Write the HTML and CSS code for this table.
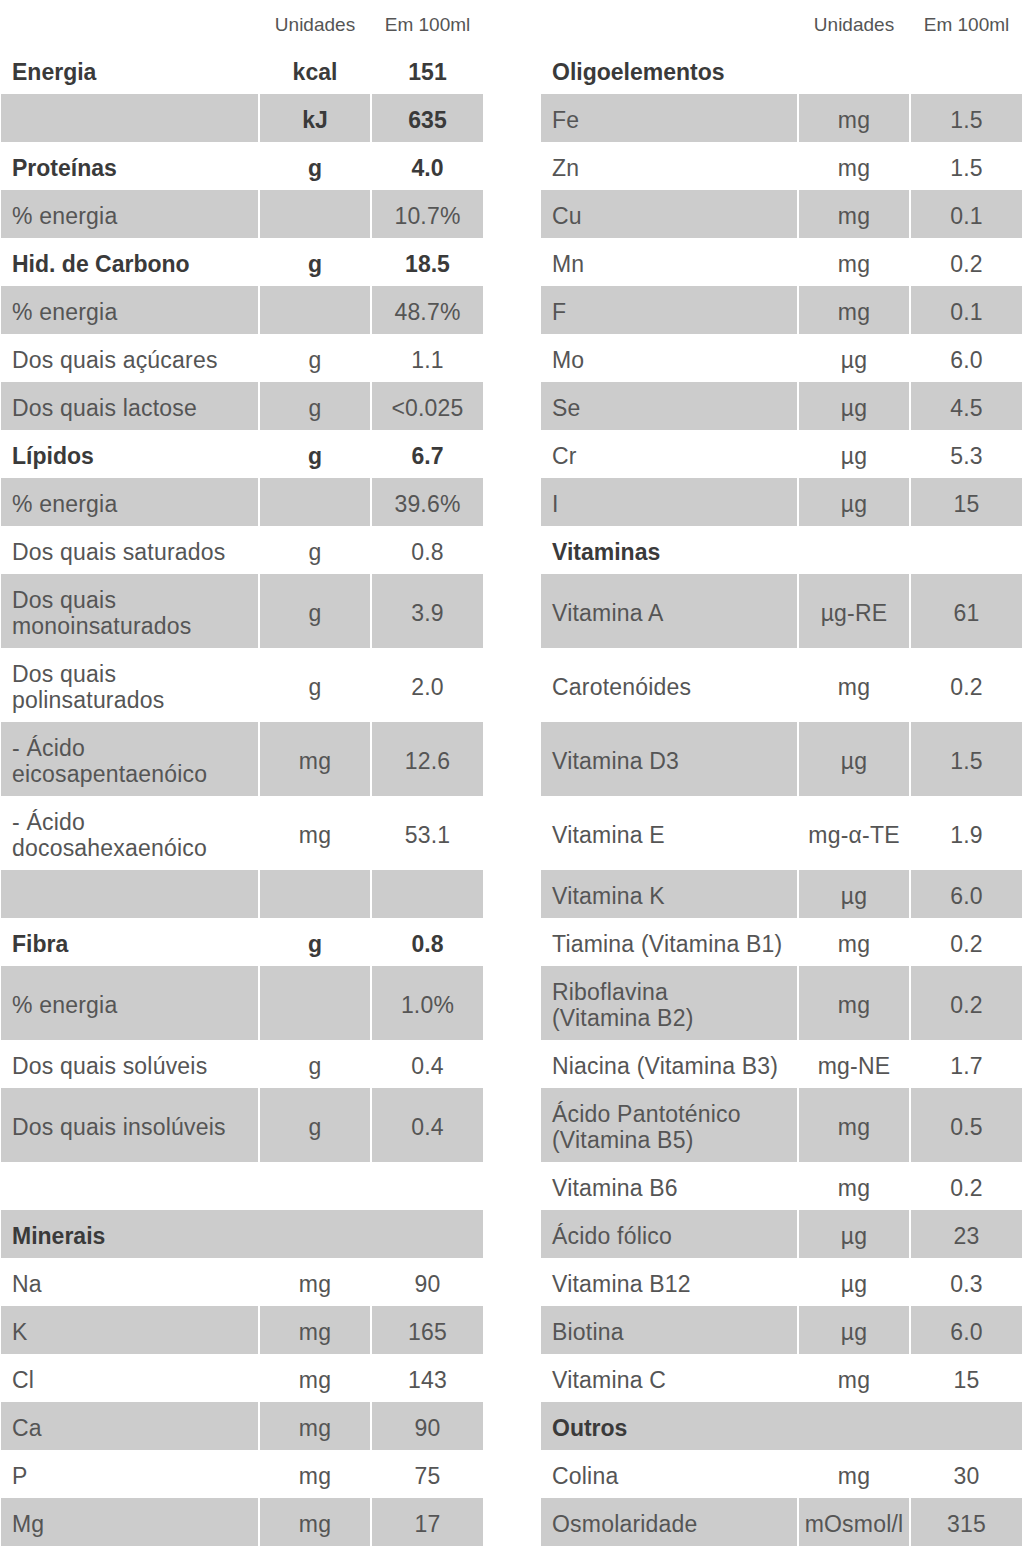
FILE: index.html
```html
<!DOCTYPE html>
<html lang="pt">
<head>
<meta charset="utf-8">
<title>Informação nutricional</title>
<link rel="stylesheet" href="styles.css">
</head>
<body>
<table class="nutri">
  <colgroup>
    <col class="c-label"><col class="c-unit"><col class="c-val">
    <col class="c-gap">
    <col class="c-label2"><col class="c-unit"><col class="c-val2">
  </colgroup>
  <tbody>
    <tr class="head">
      <td></td><td class="u">Unidades</td><td class="v">Em 100ml</td>
      <td class="gap"></td>
      <td></td><td class="u">Unidades</td><td class="v">Em 100ml</td>
    </tr>
    <tr>
      <td class="l b">Energia</td><td class="u b">kcal</td><td class="v b">151</td>
      <td class="gap"></td>
      <td class="l b" colspan="3">Oligoelementos</td>
    </tr>
    <tr class="alt">
      <td class="l"></td><td class="u b">kJ</td><td class="v b">635</td>
      <td class="gap"></td>
      <td class="l">Fe</td><td class="u">mg</td><td class="v">1.5</td>
    </tr>
    <tr>
      <td class="l b">Proteínas</td><td class="u b">g</td><td class="v b">4.0</td>
      <td class="gap"></td>
      <td class="l">Zn</td><td class="u">mg</td><td class="v">1.5</td>
    </tr>
    <tr class="alt">
      <td class="l">% energia</td><td class="u"></td><td class="v">10.7%</td>
      <td class="gap"></td>
      <td class="l">Cu</td><td class="u">mg</td><td class="v">0.1</td>
    </tr>
    <tr>
      <td class="l b">Hid. de Carbono</td><td class="u b">g</td><td class="v b">18.5</td>
      <td class="gap"></td>
      <td class="l">Mn</td><td class="u">mg</td><td class="v">0.2</td>
    </tr>
    <tr class="alt">
      <td class="l">% energia</td><td class="u"></td><td class="v">48.7%</td>
      <td class="gap"></td>
      <td class="l">F</td><td class="u">mg</td><td class="v">0.1</td>
    </tr>
    <tr>
      <td class="l">Dos quais açúcares</td><td class="u">g</td><td class="v">1.1</td>
      <td class="gap"></td>
      <td class="l">Mo</td><td class="u">µg</td><td class="v">6.0</td>
    </tr>
    <tr class="alt">
      <td class="l">Dos quais lactose</td><td class="u">g</td><td class="v">&lt;0.025</td>
      <td class="gap"></td>
      <td class="l">Se</td><td class="u">µg</td><td class="v">4.5</td>
    </tr>
    <tr>
      <td class="l b">Lípidos</td><td class="u b">g</td><td class="v b">6.7</td>
      <td class="gap"></td>
      <td class="l">Cr</td><td class="u">µg</td><td class="v">5.3</td>
    </tr>
    <tr class="alt">
      <td class="l">% energia</td><td class="u"></td><td class="v">39.6%</td>
      <td class="gap"></td>
      <td class="l">I</td><td class="u">µg</td><td class="v">15</td>
    </tr>
    <tr>
      <td class="l">Dos quais saturados</td><td class="u">g</td><td class="v">0.8</td>
      <td class="gap"></td>
      <td class="l b" colspan="3">Vitaminas</td>
    </tr>
    <tr class="alt">
      <td class="l">Dos quais monoinsaturados</td><td class="u">g</td><td class="v">3.9</td>
      <td class="gap"></td>
      <td class="l">Vitamina A</td><td class="u">µg-RE</td><td class="v">61</td>
    </tr>
    <tr>
      <td class="l">Dos quais polinsaturados</td><td class="u">g</td><td class="v">2.0</td>
      <td class="gap"></td>
      <td class="l">Carotenóides</td><td class="u">mg</td><td class="v">0.2</td>
    </tr>
    <tr class="alt">
      <td class="l">- Ácido eicosapentaenóico</td><td class="u">mg</td><td class="v">12.6</td>
      <td class="gap"></td>
      <td class="l">Vitamina D3</td><td class="u">µg</td><td class="v">1.5</td>
    </tr>
    <tr>
      <td class="l">- Ácido docosahexaenóico</td><td class="u">mg</td><td class="v">53.1</td>
      <td class="gap"></td>
      <td class="l">Vitamina E</td><td class="u">mg-α-TE</td><td class="v">1.9</td>
    </tr>
    <tr class="alt">
      <td class="l"></td><td class="u"></td><td class="v"></td>
      <td class="gap"></td>
      <td class="l">Vitamina K</td><td class="u">µg</td><td class="v">6.0</td>
    </tr>
    <tr>
      <td class="l b">Fibra</td><td class="u b">g</td><td class="v b">0.8</td>
      <td class="gap"></td>
      <td class="l">Tiamina (Vitamina B1)</td><td class="u">mg</td><td class="v">0.2</td>
    </tr>
    <tr class="alt">
      <td class="l">% energia</td><td class="u"></td><td class="v">1.0%</td>
      <td class="gap"></td>
      <td class="l">Riboflavina (Vitamina&nbsp;B2)</td><td class="u">mg</td><td class="v">0.2</td>
    </tr>
    <tr>
      <td class="l">Dos quais solúveis</td><td class="u">g</td><td class="v">0.4</td>
      <td class="gap"></td>
      <td class="l">Niacina (Vitamina B3)</td><td class="u">mg-NE</td><td class="v">1.7</td>
    </tr>
    <tr class="alt">
      <td class="l">Dos quais insolúveis</td><td class="u">g</td><td class="v">0.4</td>
      <td class="gap"></td>
      <td class="l">Ácido Pantoténico (Vitamina&nbsp;B5)</td><td class="u">mg</td><td class="v">0.5</td>
    </tr>
    <tr>
      <td class="l blank" colspan="3"></td>
      <td class="gap"></td>
      <td class="l">Vitamina B6</td><td class="u">mg</td><td class="v">0.2</td>
    </tr>
    <tr class="alt">
      <td class="l b" colspan="3">Minerais</td>
      <td class="gap"></td>
      <td class="l">Ácido fólico</td><td class="u">µg</td><td class="v">23</td>
    </tr>
    <tr>
      <td class="l">Na</td><td class="u">mg</td><td class="v">90</td>
      <td class="gap"></td>
      <td class="l">Vitamina B12</td><td class="u">µg</td><td class="v">0.3</td>
    </tr>
    <tr class="alt">
      <td class="l">K</td><td class="u">mg</td><td class="v">165</td>
      <td class="gap"></td>
      <td class="l">Biotina</td><td class="u">µg</td><td class="v">6.0</td>
    </tr>
    <tr>
      <td class="l">Cl</td><td class="u">mg</td><td class="v">143</td>
      <td class="gap"></td>
      <td class="l">Vitamina C</td><td class="u">mg</td><td class="v">15</td>
    </tr>
    <tr class="alt">
      <td class="l">Ca</td><td class="u">mg</td><td class="v">90</td>
      <td class="gap"></td>
      <td class="l b" colspan="3">Outros</td>
    </tr>
    <tr>
      <td class="l">P</td><td class="u">mg</td><td class="v">75</td>
      <td class="gap"></td>
      <td class="l">Colina</td><td class="u">mg</td><td class="v">30</td>
    </tr>
    <tr class="alt">
      <td class="l">Mg</td><td class="u">mg</td><td class="v">17</td>
      <td class="gap"></td>
      <td class="l">Osmolaridade</td><td class="u">mOsmol/l</td><td class="v">315</td>
    </tr>
  </tbody>
</table>
</body>
</html>
```
FILE: styles.css
```css
html, body {
  margin: 0;
  padding: 0;
  background: #ffffff;
}

body {
  font-family: "Liberation Sans", Arial, Helvetica, sans-serif;
  color: #555555;
}

.nutri {
  width: 1025px;
  margin-left: -1px;
  table-layout: fixed;
  border-collapse: separate;
  border-spacing: 2px 0;
  font-size: 23px;
  line-height: 26px;
  letter-spacing: 0.2px;
}

.c-label { width: 257px; }
.c-unit { width: 110px; }
.c-val { width: 111px; }
.c-gap { width: 54px; }
.c-label2 { width: 256px; }
.c-val2 { width: 111px; }

.nutri td {
  height: 48px;
  padding: 13px 0 9px;
  box-sizing: border-box;
  vertical-align: middle;
}

.nutri tr.alt td {
  background: #cccccc;
}

.nutri tr.alt td.gap {
  background: #ffffff;
}

.nutri td.l {
  text-align: left;
  padding-left: 11px;
  padding-right: 4px;
}

.nutri td.u,
.nutri td.v {
  text-align: center;
  white-space: nowrap;
}

.nutri td.b {
  font-weight: 700;
  color: #3a3a3a;
  letter-spacing: 0;
}

.nutri tr.head td {
  height: 46px;
  padding: 4px 0 0;
  font-size: 19px;
  letter-spacing: 0;
  color: #555555;
}
```
